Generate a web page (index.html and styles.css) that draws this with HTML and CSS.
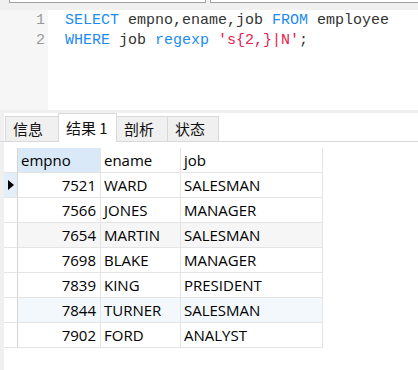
FILE: index.html
```html
<!DOCTYPE html>
<html lang="zh">
<head>
    <meta charset="UTF-8">
    <title>Query</title>
    <link rel="stylesheet" href="styles.css">
</head>
<body>
<div class="top-strip">
    <div class="field field-a"></div>
    <div class="field field-b"></div>
</div>
<div class="editor">
    <div class="gutter">
        <div class="ln">1</div>
        <div class="ln">2</div>
    </div>
    <div class="code">
        <div class="line"><span class="kw">SELECT</span> empno,ename,job <span class="kw">FROM</span> employee</div>
        <div class="line"><span class="kw">WHERE</span> job <span class="kw">regexp</span> <span class="str">'s{2,}|N'</span>;</div>
    </div>
</div>
<div class="splitter"></div>
<div class="lower">
    <div class="tabbar">
        <div class="tab">信息</div>
        <div class="tab tab-active">结果 1</div>
        <div class="tab">剖析</div>
        <div class="tab">状态</div>
    </div>
    <div class="grid">
        <div class="cell ind"></div>
        <div class="cell hd hd-sel">empno</div>
        <div class="cell hd">ename</div>
        <div class="cell hd">job</div>

        <div class="cell ind ind-cur"><svg width="6" height="10" viewBox="0 0 6 10"><path d="M0 0 L6 5 L0 10 Z" fill="#000"/></svg></div>
        <div class="cell num">7521</div>
        <div class="cell">WARD</div>
        <div class="cell">SALESMAN</div>

        <div class="cell ind"></div>
        <div class="cell num">7566</div>
        <div class="cell">JONES</div>
        <div class="cell">MANAGER</div>

        <div class="cell ind"></div>
        <div class="cell num shade">7654</div>
        <div class="cell shade">MARTIN</div>
        <div class="cell shade">SALESMAN</div>

        <div class="cell ind"></div>
        <div class="cell num">7698</div>
        <div class="cell">BLAKE</div>
        <div class="cell">MANAGER</div>

        <div class="cell ind"></div>
        <div class="cell num">7839</div>
        <div class="cell">KING</div>
        <div class="cell">PRESIDENT</div>

        <div class="cell ind"></div>
        <div class="cell num hover">7844</div>
        <div class="cell hover">TURNER</div>
        <div class="cell hover">SALESMAN</div>

        <div class="cell ind"></div>
        <div class="cell num">7902</div>
        <div class="cell">FORD</div>
        <div class="cell">ANALYST</div>
    </div>
</div>
</body>
</html>
```

FILE: styles.css
```css
html,
body {
    margin: 0;
    padding: 0;
    width: 418px;
    height: 370px;
    overflow: hidden;
    background-color: #ffffff;
}
.top-strip {
    display: flex;
    gap: 4px;
    height: 10px;
    padding-left: 9px;
    background-color: #f0f0f0;
    overflow: hidden;
}
.field {
    box-sizing: border-box;
    height: 3px;
    background-color: #ffffff;
    border: 1px solid #a0a0a0;
    border-top: none;
}
.field-a {
    width: 197px;
}
.field-b {
    flex: 1;
    margin-right: -2px;
}
.editor {
    display: flex;
    height: 100px;
    font-family: "Liberation Mono", "DejaVu Sans Mono", monospace;
    font-size: 15px;
    line-height: 20px;
}
.gutter {
    box-sizing: border-box;
    width: 48px;
    padding: 1px 3px 0 0;
    background-color: #f6f6f6;
    color: #9a9a9a;
    text-align: right;
}
.code {
    padding: 1px 0 0 17px;
    color: #333333;
}
.line {
    white-space: pre;
}
.kw {
    color: #1c8cf0;
}
.str {
    color: #e8194f;
}
.splitter {
    height: 3px;
    background-color: #f0f0f0;
}
.lower {
    height: 257px;
    border-left: 4px solid #f0f0f0;
}
.tabbar {
    display: flex;
    align-items: flex-end;
    height: 28px;
    border-bottom: 1px solid #d9d9d9;
    margin-left: -4px;
    padding-left: 5px;
    background: linear-gradient(to right, #f0f0f0 4px, #ffffff 4px);
    font-family: "Noto Sans CJK SC", sans-serif;
    font-size: 15px;
    color: #111111;
}
.tab {
    box-sizing: border-box;
    height: 25px;
    width: 52px;
    padding-left: 7px;
    line-height: 23px;
    background-color: #f0f0f0;
    border: 1px solid #d9d9d9;
    border-bottom: none;
    margin-right: -1px;
}
.tab:first-child {
    width: 54px;
}
.tab-active {
    height: 29px;
    width: 59px;
    line-height: 27px;
    margin-bottom: -1px;
    background-color: #ffffff;
    position: relative;
}
.grid {
    display: grid;
    grid-template-columns: 14px 83px 80px 142px;
    grid-auto-rows: 25px;
    margin-top: 6px;
    font-family: "Open Sans", "Noto Sans CJK SC", sans-serif;
    font-size: 15px;
    color: #000000;
}
.cell {
    box-sizing: border-box;
    display: flex;
    align-items: center;
    padding-left: 3px;
    border-right: 1px solid #e4e4e4;
    border-bottom: 1px solid #e4e4e4;
    white-space: nowrap;
}
.ind {
    padding-left: 4px;
    border-right-color: #d4d4d4;
}
.ind-cur {
    background-color: #e4eef8;
}
.hd-sel {
    background-color: #d9e9f7;
}
.num {
    justify-content: flex-end;
    padding-left: 0;
    padding-right: 4px;
}
.shade {
    background-color: #f6f6f6;
}
.hover {
    background-color: #f3f8fd;
}
```
